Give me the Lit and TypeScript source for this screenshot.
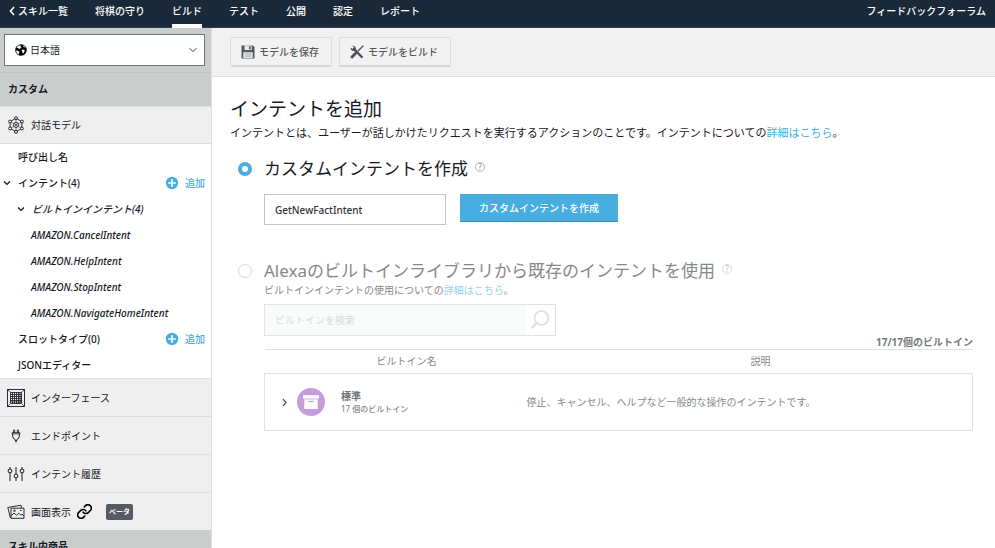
import { LitElement, html, css, svg, nothing } from "lit";
import { customElement, property } from "lit/decorators.js";
import { classMap } from "lit/directives/class-map.js";

const glyphs: Record<string, { box: string; art: unknown }> = {
  back: {
    box: "0 0 6 10",
    art: svg`<path d="M5 1 1.5 5 5 9" fill="none" stroke="currentColor" stroke-width="1.6"/>`,
  },
  down: {
    box: "0 0 8 8",
    art: svg`<path d="M1 2.6 4 5.4 7 2.6" fill="none" stroke="currentColor" stroke-width="1.4"/>`,
  },
  thinDown: {
    box: "0 0 8 8",
    art: svg`<path d="M.6 2.2 4 5.6 7.4 2.2" fill="none" stroke="currentColor" stroke-width=".8"/>`,
  },
  right: {
    box: "0 0 8 8",
    art: svg`<path d="M2.6 1 5.4 4 2.6 7" fill="none" stroke="currentColor" stroke-width="1"/>`,
  },
  globe: {
    box: "0 0 12 12",
    art: svg`<circle cx="6" cy="6" r="5.6" fill="#000"/>
      <path d="M1.4 3.6 3 1.6 5.6 1 5.2 2.3 6.6 3 5.6 4 4.6 5 3.4 4.3Z M7.6 1.4 9.6 2 10.7 3.6 9.2 3.2 8.3 2.5Z" fill="#fff"/>
      <path d="M.8 6.6 2.9 6.8 4.5 7.9 4 9.4 3.7 10.8 1.7 9.2Z M6.6 6.3 8.3 5.5 9.7 6.3 9.3 7.9 8.1 9.6 7.4 9.2 7.3 7.6Z" fill="#fff"/>
      <circle cx="6" cy="6" r="5.4" fill="none" stroke="#000" stroke-width=".5"/>`,
  },
  model: {
    box: "0 0 16 16",
    art: svg`<g fill="none" stroke="currentColor" stroke-width=".8">
      <path d="M8 2 13.200 5 13.200 11 8 14 2.800 11 2.800 5Z"/>
      <path d="M8 2V6M8 10V14M2.800 5 6.300 7M13.200 5 9.700 7M2.800 11 6.300 9M13.200 11 9.700 9" stroke-width=".5"/>
      <circle cx="8" cy="8" r="2.200"/></g>
      <circle cx="8" cy="8" r=".8" fill="currentColor"/>
      <g fill="#efefef" stroke="currentColor" stroke-width=".8">
      <circle cx="8" cy="1.900" r="1.300"/><circle cx="13.300" cy="4.900" r="1.300"/><circle cx="13.300" cy="11.100" r="1.300"/>
      <circle cx="8" cy="14.100" r="1.300"/><circle cx="2.700" cy="11.100" r="1.300"/><circle cx="2.700" cy="4.900" r="1.300"/></g>`,
  },
  grid: {
    box: "0 0 18 18",
    art: svg`<g fill="none" stroke="currentColor" stroke-width=".9"><rect x=".5" y=".5" width="17" height="17"/>
      <path d="M3.500 3.500H14.500V14.500H3.500Z" stroke-width=".8"/>
      <path d="M5.500 3V15M7.500 3V15M9.500 3V15M11.500 3V15M13 3V15M3 5.500H15M3 7.500H15M3 9.500H15M3 11.500H15M3 13H15" stroke-width=".8"/>
      <path d="M1 1 3.500 3.500M17 1 14.500 3.500M1 17 3.500 14.500M17 17 14.500 14.500" stroke-width=".7"/></g>`,
  },
  plug: {
    box: "0 0 18 18",
    art: svg`<g fill="none" stroke="currentColor" stroke-width="1">
      <path d="M6.500 5.500V3H7.700V5.500M10.300 5.500V3H11.500V5.500" stroke-width=".8"/><path d="M5 5.600H13V6.800H5Z" stroke-width=".8"/>
      <path d="M5.700 7V9.600Q5.900 11.600 8 12.400V13.400H10V12.400Q12.100 11.600 12.300 9.600V7M9 13.400V15.500"/></g>`,
  },
  sliders: {
    box: "0 0 18 16",
    art: svg`<g fill="none" stroke="currentColor" stroke-width="1">
      <path d="M3 1V3M3 7V15M9 1V8M9 12V15M15 1V3M15 7V15"/>
      <circle cx="3" cy="5" r="1.900"/><circle cx="9" cy="10" r="1.900"/><circle cx="15" cy="5" r="1.900"/></g>`,
  },
  pictures: {
    box: "0 0 18 16",
    art: svg`<g fill="none" stroke="currentColor" stroke-width=".9">
      <path d="M4 4.200H17V14.300H4Z"/><path d="M3.300 13.500.8 3.500 14 1.200 14.500 4M3.300 13.500H4"/>
      <path d="M4.200 11.800 7 9 9.500 11.300 11.800 9.300 13.800 11 15 10.300 17 12"/><circle cx="7.500" cy="6.700" r=".8"/><path d="M13 6.500H14.600"/></g>`,
  },
  link: {
    box: "1 1 22 22",
    art: svg`<g fill="none" stroke="#000" stroke-width="2.400" stroke-linecap="round">
      <path d="M10 13a5 5 0 0 0 7.540.540l3-3a5 5 0 0 0-7.070-7.070l-1.720 1.710"/>
      <path d="M14 11a5 5 0 0 0-7.540-.540l-3 3a5 5 0 0 0 7.070 7.070l1.710-1.710"/></g>`,
  },
  plus: {
    box: "0 0 14 14",
    art: svg`<circle cx="7" cy="7" r="6.200" fill="#48aee1"/><path d="M7 3.200V10.800M3.200 7H10.800" stroke="#fff" stroke-width="1.700"/>`,
  },
  save: {
    box: "0 0 14 14",
    art: svg`<path d="M.5.5H11.800L13.500 2.200V13.500H.5Z" fill="#53585c"/>
      <path d="M3.500.5H10.700V5H3.500Z" fill="#e9e9e9"/><path d="M8 1.200H9.600V4.300H8Z" fill="#53585c"/>
      <path d="M2.300 7.200H11.700V13H2.300Z" fill="#eee"/><path d="M3.500 8.700H10.500M3.500 10.200H10.500M3.500 11.700H10.500" stroke="#9a9ea0" stroke-width=".7"/>`,
  },
  tools: {
    box: "0 0 14 14",
    art: svg`<g fill="none" stroke="#4a4e55" stroke-linecap="round"><path d="M4 4.200 11.800 12" stroke-width="2.400"/>
      <path d="M12.800 1.300 8.200 5.800" stroke-width="1.300"/><path d="M5.400 8.600 2 12.100" stroke-width="2.800"/></g>
      <path d="M2.400.7A3 3 0 0 1 5.800 4.400L4.200 5.900A3.100 3.100 0 0 1 .5 2.600L2.400 4 3.900 2.500Z" fill="#4a4e55"/>
      <path d="M11.600 1.200 13.500.5 12.900 2.400Z" fill="#4a4e55"/>`,
  },
  search: {
    box: "0 0 20 20",
    art: svg`<circle cx="11.500" cy="8" r="7" fill="none" stroke="currentColor" stroke-width="1.700"/><path d="M6.600 13 1.500 18.200" stroke="currentColor" stroke-width="2"/>`,
  },
  archive: {
    box: "0 0 28 28",
    art: svg`<circle cx="14" cy="14" r="14" fill="#c49ddc"/><path d="M6 7.200H22V10.600H6Z" fill="#fff"/>
      <path d="M7.300 11.400H20.700V21H7.300Z" fill="#fff"/><path d="M11.400 13.500H16.600" stroke="#c49ddc" stroke-width="1.200"/>`,
  },
};

@customElement("ui-icon")
export class UiIcon extends LitElement {
  @property() name = "";
  static styles = css`
    :host { display: inline-flex; flex: none; width: 16px; height: 16px; }
    svg { width: 100%; height: 100%; }
  `;
  render() {
    const g = glyphs[this.name];
    return g ? html`<svg viewBox=${g.box} aria-hidden="true">${g.art}</svg>` : nothing;
  }
}

interface TreeRow {
  label: string;
  level: number;
  open?: boolean;
  add?: boolean;
}

const tabs = ["将棋の守り", "ビルド", "テスト", "公開", "認定", "レポート"];

const tree: TreeRow[] = [
  { label: "呼び出し名", level: 0 },
  { label: "インテント(4)", level: 0, open: true, add: true },
  { label: "ビルトインインテント(4)", level: 1, open: true },
  { label: "AMAZON.CancelIntent", level: 2 },
  { label: "AMAZON.HelpIntent", level: 2 },
  { label: "AMAZON.StopIntent", level: 2 },
  { label: "AMAZON.NavigateHomeIntent", level: 2 },
  { label: "スロットタイプ(0)", level: 0, add: true },
  { label: "JSONエディター", level: 0 },
];

const sections = [
  { label: "インターフェース", icon: "grid" },
  { label: "エンドポイント", icon: "plug" },
  { label: "インテント履歴", icon: "sliders" },
  { label: "画面表示", icon: "pictures", beta: true },
];

@customElement("app-root")
export class AppRoot extends LitElement {
  static styles = css`
    :host {
      display: flex;
      flex-direction: column;
      height: 100vh;
      overflow: hidden;
      background: #fff;
      color: #16191f;
      font: 10px/16px "Noto Sans", "Noto Sans CJK JP", sans-serif;
    }
    * { box-sizing: border-box; }
    a { color: inherit; text-decoration: none; }
    button, input, select { font: inherit; color: inherit; margin: 0; }
    button { cursor: pointer; }
    h1, h2, p { margin: 0; font-size: inherit; font-weight: 400; }

    .top {
      display: flex;
      flex: none;
      gap: 27px;
      height: 28px;
      padding: 0 9px;
      background: #1a2939;
      border-bottom: 1px solid #33414f;
      color: #fff;
      font-weight: 500;
      line-height: 22px;
    }
    .back { display: flex; align-items: center; gap: 3px; height: 22px; }
    .back ui-icon { width: 6px; height: 10px; }
    .tab { height: 28px; }
    .tab.active { border-bottom: 4px solid #fff; }
    .forum { margin-left: auto; }

    .body { display: flex; flex: 1; min-height: 0; }
    .side {
      flex: none;
      width: 212px;
      overflow-y: auto;
      scrollbar-width: none;
      border-right: 1px solid #dedede;
    }
    .locale { padding: 6px 6px 6px 4px; background: #c9cecd; border-bottom: 1px solid #bfc5c4; }
    .picker {
      display: flex;
      align-items: center;
      height: 32px;
      padding: 0 7px 0 10px;
      background: #fff;
      border: 1px solid #6f7777;
    }
    .picker ui-icon { width: 12px; height: 12px; }
    .picker ui-icon.arrow { width: 8px; height: 8px; }
    .picker select { flex: 1; appearance: none; border: 0; background: none; padding: 0 3px; outline: 0; }
    .side .band { padding: 8px 8px 9px; background: #c9cecd; font-weight: 700; }
    .entry {
      display: flex;
      align-items: center;
      gap: 6px;
      height: 38px;
      padding: 0 7px;
      background: #efefef;
      border-top: 1px solid #dedede;
    }
    .entry.model { height: 37px; }
    .entry ui-icon { width: 18px; height: 18px; }
    .entry ui-icon.chain { width: 15px; height: 15px; }
    .beta {
      margin-left: 8px;
      padding: 0 3px;
      border-radius: 2px;
      background: #575963;
      color: #fff;
      font-weight: 700;
      font-size: 7px;
    }
    .tree { margin: 0; padding: 0; list-style: none; border-top: 1px solid #dedede; }
    .row { display: flex; align-items: center; height: 26px; padding: 0 6px 0 3px; font-weight: 500; }
    .row.nested { padding-left: 17px; font-style: italic; }
    .row.leaf { padding-left: 16px; font-style: italic; }
    .twist { display: flex; flex: none; width: 15px; }
    .twist ui-icon { width: 8px; height: 8px; }
    .add {
      display: flex;
      align-items: center;
      gap: 6px;
      margin-left: auto;
      padding: 0;
      border: 0;
      background: none;
      color: #48aee1;
    }
    .add ui-icon { width: 14px; height: 14px; }

    .main { flex: 1; min-width: 0; overflow-y: auto; scrollbar-width: none; }
    .tools {
      display: flex;
      gap: 7px;
      padding: 9px 18px;
      background: #f1f1f1;
      border-bottom: 1px solid #dedede;
    }
    .tool {
      display: flex;
      align-items: center;
      gap: 4px;
      height: 30px;
      padding: 0 12px 0 10px;
      background: #f2f2f2;
      border: 1px solid #dedede;
      border-bottom: 2px solid #d6d6d6;
      border-radius: 2px;
      color: #55595c;
      font-weight: 500;
    }
    .tool ui-icon { width: 14px; height: 14px; }
    .content { padding: 17px 22px 18px 18px; }
    .title { font-size: 19px; line-height: 31px; }
    .lead { font-size: 11px; line-height: 16px; }
    .content a { color: #48aee1; }
    .choice { margin-left: 34px; }
    .head { display: flex; align-items: center; margin-left: -26px; }
    .head label { font-size: 17px; line-height: 24px; }
    .head input {
      appearance: none;
      width: 14px;
      height: 14px;
      margin-right: 12px;
      border: 1px solid #d5dada;
      border-radius: 50%;
      background: #fff;
    }
    .head input:checked { border: 4px solid #48aee1; }
    .help {
      width: 10px;
      height: 10px;
      margin: 0 0 4px 7px;
      padding: 0;
      border: 1px solid #b5baba;
      border-radius: 50%;
      background: none;
      color: #8a8f8f;
      font-size: 8px;
      line-height: 8px;
    }
    .custom { margin-top: 16px; }
    .create { display: flex; align-items: flex-start; gap: 14px; margin-top: 13px; }
    .name { width: 182px; height: 31px; padding: 0 10px; border: 1px solid #bcc8c4; outline: 0; font-weight: 500; color: #333; }
    .submit {
      height: 28px;
      padding: 0 18px 1px;
      border: 1px solid #48aee1;
      border-bottom-color: #2f8fc4;
      background: #48aee1;
      color: #fff;
      font-weight: 500;
    }
    .library { margin-top: 34px; color: #85888a; }
    .library a { color: #97d0ee; }
    .library .help { border-color: #dadddd; color: #bfc3c3; }
    .note { line-height: 14px; }
    .find { display: flex; width: 292px; height: 32px; margin-top: 7px; border: 1px solid #dee4e2; }
    .find input { flex: 1; min-width: 0; padding: 0 10px; border: 0; background: #f9fbfa; outline: 0; }
    .find input::placeholder { color: #d9dcdc; }
    .find button { display: flex; align-items: center; width: 29px; padding: 0 4px; border: 0; background: #fff; color: #dcdfdf; }
    .find ui-icon { width: 20px; height: 20px; }
    .content .count { line-height: 13px; text-align: right; font-weight: 700; color: #787b7d; }
    .list { width: 100%; border-collapse: collapse; table-layout: fixed; border-top: 1px solid #dee2e2; }
    .list th { width: 37%; height: 24px; padding: 0 0 2px 22px; font-weight: 400; }
    .list th + th { width: auto; }
    .list tbody tr { height: 57px; border: 1px solid #dfe3e3; }
    .list td { padding: 0; }
    .kind { display: flex; align-items: center; padding-left: 15px; }
    .kind button { display: flex; padding: 0; border: 0; background: none; color: #444; }
    .kind button ui-icon { width: 9px; height: 9px; }
    .kind .badge { width: 28px; height: 28px; margin: 0 16px 0 8px; }
    .kind strong { display: block; line-height: 13px; color: #717476; }
    .kind small { display: block; font-size: 8px; line-height: 12px; font-weight: 500; }
  `;

  private renderRow(r: TreeRow) {
    return html`<li class=${classMap({ row: true, nested: r.level === 1, leaf: r.level === 2 })}>
      <span class="twist">${r.open ? html`<ui-icon name="down"></ui-icon>` : nothing}</span>
      <a href="#">${r.label}</a>
      ${r.add ? html`<button class="add"><ui-icon name="plus"></ui-icon>追加</button>` : nothing}
    </li>`;
  }

  render() {
    return html`
      <nav class="top">
        <a class="back" href="#"><ui-icon name="back"></ui-icon>スキル一覧</a>
        ${tabs.map((t) => html`<a href="#" class=${classMap({ tab: true, active: t === "ビルド" })}>${t}</a>`)}
        <a class="forum" href="#">フィードバックフォーラム</a>
      </nav>
      <div class="body">
        <aside class="side">
          <div class="locale">
            <div class="picker">
              <ui-icon name="globe"></ui-icon>
              <select aria-label="言語"><option>日本語</option></select>
              <ui-icon class="arrow" name="thinDown"></ui-icon>
            </div>
          </div>
          <h2 class="band">カスタム</h2>
          <a class="entry model" href="#"><ui-icon name="model"></ui-icon>対話モデル</a>
          <ul class="tree">${tree.map((r) => this.renderRow(r))}</ul>
          ${sections.map(
            (s) => html`<a class="entry" href="#"><ui-icon name=${s.icon}></ui-icon>${s.label}
              ${s.beta ? html`<ui-icon class="chain" name="link"></ui-icon><span class="beta">ベータ</span>` : nothing}</a>`
          )}
          <h2 class="band">スキル内商品</h2>
        </aside>
        <main class="main">
          <div class="tools">
            <button class="tool"><ui-icon name="save"></ui-icon>モデルを保存</button>
            <button class="tool"><ui-icon name="tools"></ui-icon>モデルをビルド</button>
          </div>
          <div class="content">
            <h1 class="title">インテントを追加</h1>
            <p class="lead">インテントとは、ユーザーが話しかけたリクエストを実行するアクションのことです。インテントについての<a href="#">詳細はこちら</a>。</p>
            <section class="choice custom">
              <div class="head">
                <input type="radio" name="source" id="custom" checked />
                <label for="custom">カスタムインテントを作成</label>
                <button class="help" aria-label="ヘルプ">?</button>
              </div>
              <div class="create">
                <input class="name" aria-label="インテント名" value="GetNewFactIntent" />
                <button class="submit">カスタムインテントを作成</button>
              </div>
            </section>
            <section class="choice library">
              <div class="head">
                <input type="radio" name="source" id="library" />
                <label for="library">Alexaのビルトインライブラリから既存のインテントを使用</label>
                <button class="help" aria-label="ヘルプ">?</button>
              </div>
              <p class="note">ビルトインインテントの使用についての<a href="#">詳細はこちら</a>。</p>
              <div class="find">
                <input type="text" aria-label="ビルトインを検索" placeholder="ビルトインを検索" />
                <button aria-label="検索"><ui-icon name="search"></ui-icon></button>
              </div>
              <p class="count">17/17個のビルトイン</p>
              <table class="list">
                <thead><tr><th>ビルトイン名</th><th>説明</th></tr></thead>
                <tbody>
                  <tr>
                    <td>
                      <div class="kind">
                        <button aria-label="展開"><ui-icon name="right"></ui-icon></button>
                        <ui-icon class="badge" name="archive"></ui-icon>
                        <div><strong>標準</strong><small>17 個のビルトイン</small></div>
                      </div>
                    </td>
                    <td>停止、キャンセル、ヘルプなど一般的な操作のインテントです。</td>
                  </tr>
                </tbody>
              </table>
            </section>
          </div>
        </main>
      </div>
    `;
  }
}
